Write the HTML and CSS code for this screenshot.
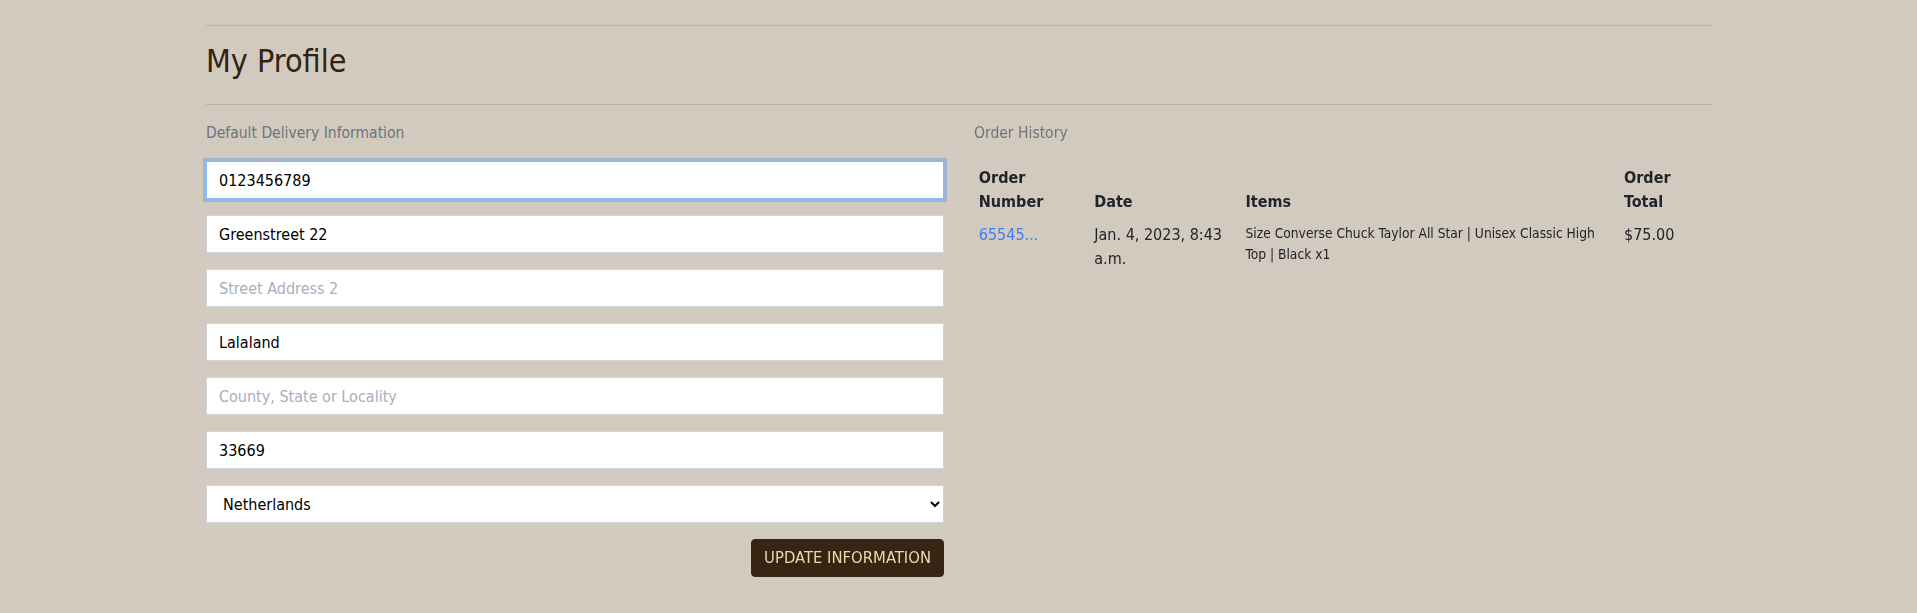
FILE: index.html
```html
<!DOCTYPE html>
<html lang="en">
<head>
<meta charset="utf-8">
<title>My Profile</title>
<link rel="stylesheet" href="styles.css">
</head>
<body>
<div class="page">
  <hr class="rule">
  <h2 class="title">My Profile</h2>
  <hr class="rule rule-bottom">
  <div class="grid">
    <section class="col">
      <p class="label">Default Delivery Information</p>
      <form class="form">
        <input class="field focused" type="text" value="0123456789" autofocus>
        <input class="field" type="text" value="Greenstreet 22">
        <input class="field" type="text" placeholder="Street Address 2">
        <input class="field" type="text" value="Lalaland">
        <input class="field" type="text" placeholder="County, State or Locality">
        <input class="field" type="text" value="33669">
        <select class="field select">
          <option>Netherlands</option>
        </select>
        <div class="actions">
          <button class="btn" type="button">UPDATE INFORMATION</button>
        </div>
      </form>
    </section>
    <section class="col">
      <p class="label">Order History</p>
      <table class="orders">
        <colgroup>
          <col class="c-num">
          <col class="c-date">
          <col class="c-items">
          <col class="c-total">
        </colgroup>
        <thead>
          <tr>
            <th>Order Number</th>
            <th>Date</th>
            <th>Items</th>
            <th>Order Total</th>
          </tr>
        </thead>
        <tbody>
          <tr>
            <td><a class="order-link" href="#">65545...</a></td>
            <td>Jan. 4, 2023, 8:43 a.m.</td>
            <td class="items">Size Converse Chuck Taylor All Star | Unisex Classic High Top | Black x1</td>
            <td>$75.00</td>
          </tr>
        </tbody>
      </table>
    </section>
  </div>
</div>
</body>
</html>
```

FILE: styles.css
```css
html, body {
  margin: 0;
  padding: 0;
}

body {
  background: #d2c9bf;
  font-family: "DejaVu Sans Condensed", "DejaVu Sans", sans-serif;
  font-size: 16px;
  line-height: 1.5;
  color: #212529;
}

.page {
  display: flex;
  flex-direction: column;
  padding: 9px 205px 0 206px;
}

.rule {
  border: 0;
  border-top: 1px solid rgba(0, 0, 0, 0.1);
  margin: 16px 0;
  height: 0;
}

.rule-bottom {
  margin-bottom: 17px;
}

.title {
  margin: 0 0 8px;
  font-size: 32px;
  line-height: 38px;
  font-weight: 400;
  color: #33230f;
}

.grid {
  display: grid;
  grid-template-columns: 738px 738px;
  column-gap: 30px;
}

.label {
  margin: 0 0 17px;
  font-size: 15.5px;
  line-height: 22px;
  color: #6c757d;
}

.form {
  display: flex;
  flex-direction: column;
  gap: 16px;
  margin: 0;
}

.field {
  box-sizing: border-box;
  display: block;
  width: 100%;
  height: 38px;
  padding: 6px 12px;
  margin: 0;
  font-family: inherit;
  font-size: 16px;
  line-height: 1.5;
  color: #000;
  background: #fff;
  border: 1px solid #ced4da;
  border-radius: 0;
  outline: none;
}

.field::placeholder {
  color: #a6afbd;
  opacity: 1;
}

.field.focused {
  border-color: #80bdff;
  box-shadow: 0 0 0 3px rgba(0, 123, 255, 0.25);
  caret-color: #000;
}

.select {
  padding: 6px 8px 6px 12px;
}

.actions {
  display: flex;
  justify-content: flex-end;
}

.btn {
  box-sizing: border-box;
  height: 38px;
  padding: 6px 12px;
  font-family: inherit;
  font-size: 16.5px;
  line-height: 1.5;
  color: #ecd9a8;
  background: #362515;
  border: 1px solid #362515;
  border-radius: 4px;
  cursor: pointer;
}

.orders {
  width: 738px;
  table-layout: fixed;
  border-collapse: collapse;
  color: #212529;
}

.c-num { width: 115.5px; }
.c-date { width: 151.2px; }
.c-items { width: 378.5px; }
.c-total { width: 92.8px; }

.orders th,
.orders td {
  padding: 4.8px;
  text-align: left;
}

.orders th {
  vertical-align: bottom;
  font-weight: 700;
}

.orders td {
  vertical-align: top;
}

.orders .items {
  font-size: 13.7px;
  line-height: 21px;
}

.order-link {
  color: #3f7ef2;
  text-decoration: none;
}
```
